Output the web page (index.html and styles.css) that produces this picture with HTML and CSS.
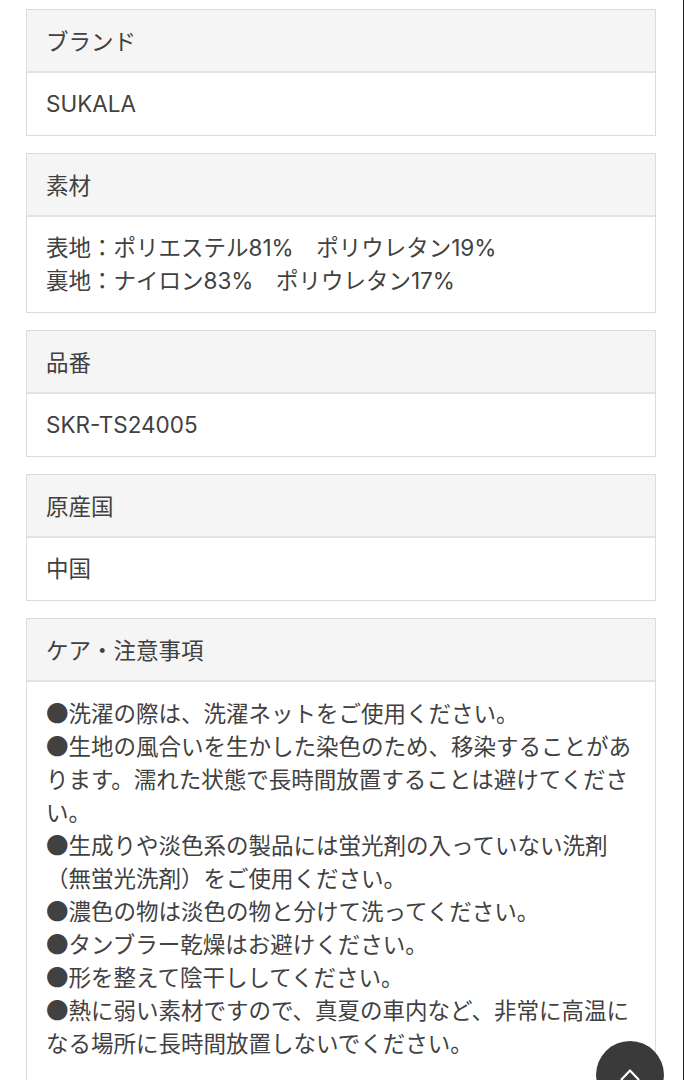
FILE: index.html
```html
<!DOCTYPE html>
<html lang="ja">
<head>
<meta charset="utf-8">
<link rel="stylesheet" href="styles.css">
</head>
<body>
<main class="specs">
  <section class="spec">
    <h2 class="spec-head">ブランド</h2>
    <div class="spec-body">SUKALA</div>
  </section>
  <section class="spec">
    <h2 class="spec-head">素材</h2>
    <div class="spec-body">表地：ポリエステル81%　ポリウレタン19%<br>裏地：ナイロン83%　ポリウレタン17%</div>
  </section>
  <section class="spec">
    <h2 class="spec-head">品番</h2>
    <div class="spec-body">SKR-TS24005</div>
  </section>
  <section class="spec">
    <h2 class="spec-head">原産国</h2>
    <div class="spec-body">中国</div>
  </section>
  <section class="spec">
    <h2 class="spec-head">ケア・注意事項</h2>
    <div class="spec-body care">●洗濯の際は、洗濯ネットをご使用ください。<br>●生地の風合いを生かした染色のため、移染することがあります。濡れた状態で長時間放置することは避けてください。<br>●生成りや淡色系の製品には蛍光剤の入っていない洗剤（無蛍光洗剤）をご使用ください。<br>●濃色の物は淡色の物と分けて洗ってください。<br>●タンブラー乾燥はお避けください。<br>●形を整えて陰干ししてください。<br>●熱に弱い素材ですので、真夏の車内など、非常に高温になる場所に長時間放置しないでください。</div>
  </section>
</main>
<a class="to-top" href="#" aria-label="ページトップへ">
  <svg width="22" height="14" viewBox="0 0 22 14"><path d="M2 13 L11 3.5 L20 13" fill="none" stroke="#fff" stroke-width="2.2"/></svg>
</a>
</body>
</html>
```
FILE: styles.css
```css
html, body {
  margin: 0;
  padding: 0;
  background: #fff;
}
body {
  font-family: "Inter", "Noto Sans CJK JP", sans-serif;
  color: #414141;
  font-size: 22.5px;
  line-height: 33px;
  border-right: 1px solid #1e1e1e;
  min-height: 100vh;
  box-sizing: border-box;
}
.specs {
  display: flex;
  flex-direction: column;
  gap: 17px;
  padding: 9px 27px 40px 26px;
}
.spec {
  border: 1px solid #dcdcdc;
  background: #fff;
}
.spec-head {
  margin: 0;
  font-family: "Noto Sans CJK JP", sans-serif;
  font-size: 22.5px;
  font-weight: 400;
  line-height: 33px;
  background: #f5f5f5;
  border-bottom: 2px solid #e2e2e2;
  padding: 14px 19px 14px 19px;
}
.spec-body {
  padding: 14px 19px 15px 19px;
  line-break: strict;
}
.care {
  font-family: "Noto Sans CJK JP", sans-serif;
  padding-bottom: 40px;
}
.to-top {
  position: fixed;
  right: 20px;
  bottom: -29px;
  width: 68px;
  height: 68px;
  border-radius: 50%;
  background: #3a3a3a;
  display: flex;
  align-items: flex-start;
  justify-content: center;
  padding-top: 26px;
  box-sizing: border-box;
}
```
